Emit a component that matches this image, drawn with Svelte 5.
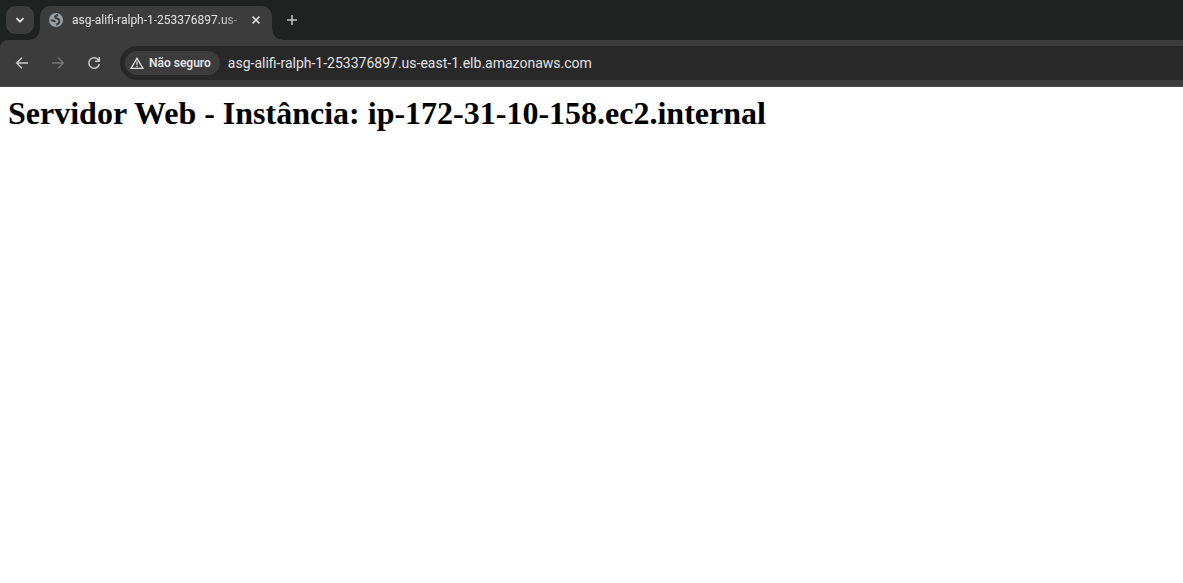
<script>
  const host = 'asg-alifi-ralph-1-253376897.us-east-1.elb.amazonaws.com';
  const tabTitle = host.slice(0, 31);
  let address = $state(host);
</script>

<div class="browser">
  <header>
    <div class="strip">
      <button class="search" aria-label="Pesquisar guias">
        <svg width="10" height="10" viewBox="0 0 10 10"><path d="M1.5 3.2 5 6.7l3.5-3.5" /></svg>
      </button>
      <div class="tab">
        <svg class="globe" width="14" height="14" viewBox="0 0 14 14">
          <circle cx="7" cy="7" r="7" />
          <path d="M9.200 2.400C7 2.200 5.800 3 6.200 4.200c.5 1.500 2.600 1 3.700 2.300 1.200 1.500.4 4.200-2.700 5.200M1.800 7.200c2.300-.2 2.600 1 4.800 1.200" />
        </svg>
        <span class="title">{tabTitle}</span>
        <button class="close" aria-label="Fechar">
          <svg width="8" height="8" viewBox="0 0 8 8"><path d="m.6.6 6.800 6.800M7.400.6.6 7.400" /></svg>
        </button>
      </div>
      <button class="new" aria-label="Nova guia">
        <svg width="12" height="12" viewBox="0 0 12 12"><path d="M6 1v10M1 6h10" /></svg>
      </button>
    </div>
    <nav class="toolbar">
      <button class="nav" aria-label="Voltar">
        <svg width="14" height="14" viewBox="0 0 14 14"><path d="M13 7H2M7 1.700 1.700 7 7 12.300" /></svg>
      </button>
      <button class="nav off" aria-label="Avançar" disabled>
        <svg width="14" height="14" viewBox="0 0 14 14"><path d="M1 7h11M7 1.700 12.300 7 7 12.300" /></svg>
      </button>
      <button class="nav" aria-label="Recarregar">
        <svg width="14" height="14" viewBox="0 0 14 14"><path d="M11.800 4.500A5.300 5.300 0 1 0 12.300 8M12.300 1v4.300H8" /></svg>
      </button>
      <div class="omnibox">
        <button class="chip">
          <svg width="14" height="12" viewBox="0 0 14 12"><path d="M7 1.300 13 11.300H1z" /><path d="M7 4.500v3.300M7 8.800v1.200" /></svg>
          <span>Não seguro</span>
        </button>
        <input aria-label="Endereço" bind:value={address} spellcheck="false" />
      </div>
    </nav>
  </header>
  <main>
    <h1>Servidor Web - Instância: ip-172-31-10-158.ec2.internal</h1>
  </main>
</div>

<style>
  :global(body) { margin: 0; background: #fff; }
  .browser { min-height: 100vh; font-family: Roboto, "Noto Sans", sans-serif; color: #e3e3e3; }
  button { display: flex; align-items: center; justify-content: center; flex: none; margin: 0; padding: 0; border: 0; background: none; color: inherit; font: inherit; }
  svg { display: block; flex: none; fill: none; stroke: currentColor; stroke-width: 1.5px; }
  header { background: #202221; }
  .strip { display: flex; height: 34px; padding: 6px 6px 0; }
  .search { width: 28px; height: 28px; margin-right: 6px; border-radius: 9px; background: #3c3c3c; }
  .search svg { stroke-width: 1.800px; }
  .tab { position: relative; display: flex; align-items: center; box-sizing: border-box; width: 232px; height: 34px; padding: 0 8px 6px 9px; border-radius: 10px 10px 0 0; background: #3c3c3c; }
  .tab::before, .tab::after { content: ""; position: absolute; bottom: 0; width: 10px; height: 10px; }
  .tab::before { right: 100%; background: radial-gradient(circle at 0 0, transparent 9px, #3c3c3c 10px); }
  .tab::after { left: 100%; background: radial-gradient(circle at 100% 0, transparent 9px, #3c3c3c 10px); }
  .globe circle { fill: #9aa0a6; stroke: none; }
  .globe path { stroke: #3c3c3c; stroke-width: 2px; }
  .title { flex: 1; min-width: 0; margin: 0 4px 0 9px; overflow: hidden; white-space: nowrap; font-size: 12px; line-height: 16px; mask-image: linear-gradient(to left, #0003, #000 24px); }
  .close { width: 16px; height: 16px; }
  .new { width: 28px; height: 28px; margin-left: 6px; color: #c7c7c7; }
  .toolbar { display: flex; align-items: center; height: 34px; padding: 6px 0 6px 8px; border-bottom: 1px solid #4a4949; border-radius: 8px 0 0; background: #3c3c3c; }
  .nav { width: 28px; height: 28px; margin-right: 8px; color: #c7c7c7; }
  .off { color: #757575; }
  .omnibox { display: flex; align-items: center; flex: 1; min-width: 0; height: 34px; margin-left: 4px; border-radius: 17px 0 0 17px; background: #282828; }
  .chip { gap: 5px; height: 24px; margin-left: 5px; padding: 0 9px 0 5px; border-radius: 12px; background: #3c3c3c; font-size: 12px; font-weight: 600; line-height: 16px; }
  .chip svg { stroke-width: 1.300px; }
  input { flex: 1; min-width: 0; height: 24px; margin: 0 0 0 8px; padding: 0; border: 0; outline: 0; background: none; color: inherit; font: inherit; font-size: 14px; line-height: 20px; }
  main { padding: 8px; }
  h1 { margin: 0; color: #000; font: bold 32px/37px "Liberation Serif", "Times New Roman", serif; }
</style>
